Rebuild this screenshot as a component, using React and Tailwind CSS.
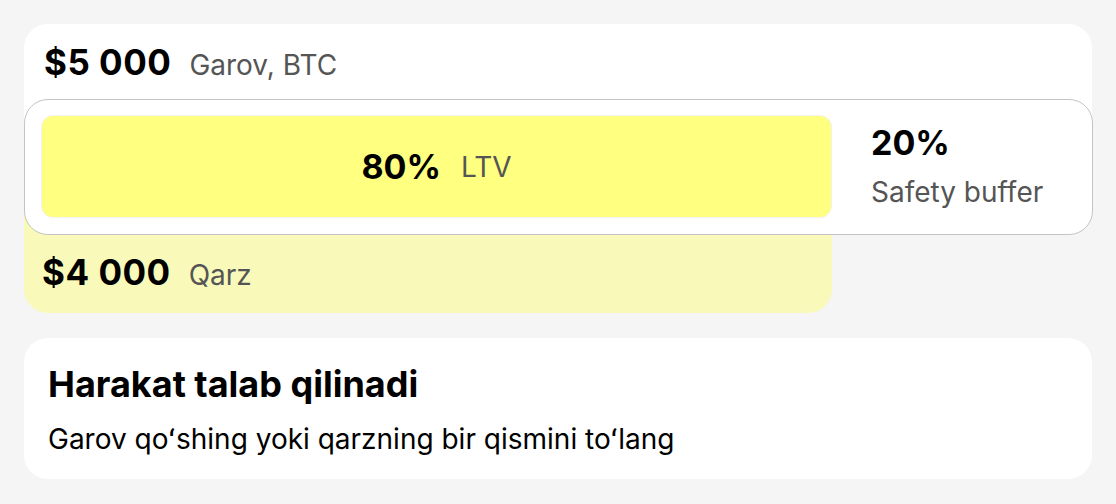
export default function App() {
  return (
    <div
      className="min-h-screen bg-[#f5f5f5] p-6 flex flex-col gap-[25px]"
      style={{ fontFamily: "Inter, 'Noto Sans', sans-serif" }}
    >
      {/* collateral / loan block */}
      <div className="relative">
        <div className="h-[143px] bg-white rounded-t-[24px] px-5 pt-[18px]">
          <div className="flex items-baseline gap-[18px]">
            <span className="text-[35px] leading-[40px] font-bold text-black tracking-[0.5px]">$5 000</span>
            <span className="text-[28px] text-[#555555]">Garov, BTC</span>
          </div>
        </div>
        <div className="h-[146px] w-[808px] bg-[#f9f9b9] rounded-b-[24px] px-[18px] pb-[17px] flex flex-col justify-end">
          <div className="flex items-baseline gap-[18px]">
            <span className="text-[35px] leading-[40px] font-bold text-black tracking-[0.5px]">$4 000</span>
            <span className="text-[28px] text-[#555555]">Qarz</span>
          </div>
        </div>

        {/* LTV box over both */}
        <div className="absolute top-[75px] left-0 right-[-1px] h-[136px] bg-white border border-[#c4c4c4] rounded-[24px] pt-[15px] pb-4 pl-4 flex">
          <div className="w-[791px] h-[103px] bg-[#ffff80] border border-[#f2f2f2] rounded-[12px] flex items-center justify-center gap-5">
            <span className="text-[34px] font-bold text-black">80%</span>
            <span className="text-[28px] text-[#555555]">LTV</span>
          </div>
          <div className="ml-[39px] flex flex-col justify-center">
            <span className="text-[34px] leading-[40px] font-bold text-black">20%</span>
            <span className="text-[28px] leading-[36px] mt-[11px] text-[#555555]">Safety buffer</span>
          </div>
        </div>
      </div>

      {/* action card */}
      <div className="h-[141px] bg-white rounded-[24px] px-6 pt-[26px]">
        <h2 className="text-[36px] leading-[40px] font-bold text-black">Harakat talab qilinadi</h2>
        <p className="mt-[19px] text-[28px] leading-[32px] text-black">
          Garov qoʻshing yoki qarzning bir qismini toʻlang
        </p>
      </div>
    </div>
  );
}
